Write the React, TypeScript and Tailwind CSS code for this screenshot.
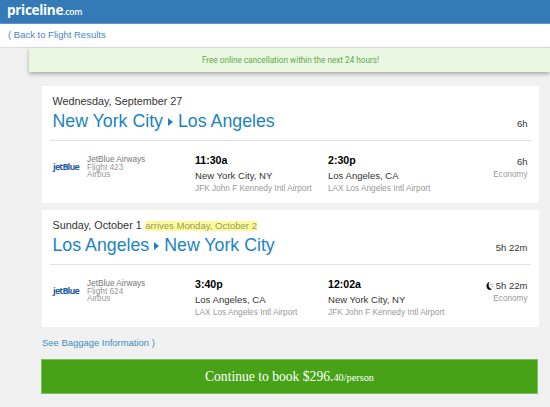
import React from "react";

interface Stop {
  time: string;
  city: string;
  airport: string;
}

interface Flight {
  date: string;
  arrives?: string;
  from: string;
  to: string;
  duration: string;
  flightNumber: string;
  overnight: boolean;
  stops: Stop[];
}

const flights: Flight[] = [
  {
    date: "Wednesday, September 27",
    from: "New York City",
    to: "Los Angeles",
    duration: "6h",
    flightNumber: "Flight 423",
    overnight: false,
    stops: [
      { time: "11:30a", city: "New York City, NY", airport: "JFK John F Kennedy Intl Airport" },
      { time: "2:30p", city: "Los Angeles, CA", airport: "LAX Los Angeles Intl Airport" },
    ],
  },
  {
    date: "Sunday, October 1",
    arrives: "arrives Monday, October 2",
    from: "Los Angeles",
    to: "New York City",
    duration: "5h 22m",
    flightNumber: "Flight 624",
    overnight: true,
    stops: [
      { time: "3:40p", city: "Los Angeles, CA", airport: "LAX Los Angeles Intl Airport" },
      { time: "12:02a", city: "New York City, NY", airport: "JFK John F Kennedy Intl Airport" },
    ],
  },
];

const MoonIcon: React.FC = () => (
  <svg width="8" height="8" viewBox="0 0 8 8" className="mr-[2px]">
    <path d="M3.6 0C-0.6 0.6 -0.6 7.4 3.6 7.9C4.6 8 5.4 7.6 5.9 7C2.6 6.6 1.8 2.6 3.6 0Z" fill="#111" />
    <circle cx="4.9" cy="2.6" r="0.7" fill="#4f86ad" />
    <circle cx="7" cy="2" r="0.6" fill="#8a8a8a" />
    <circle cx="6.2" cy="4.4" r="0.6" fill="#8a8a8a" />
  </svg>
);

const FlightCard: React.FC<{ flight: Flight }> = ({ flight }) => {
  return (
    <article className="h-[117px] rounded-[1px] bg-white px-2">
      <div className="flex h-[55px] items-start justify-between border-b border-[#e2e2e2] pl-[2.5px] pr-[3px] pt-[9px]">
        <div>
          <p className="flex h-[13px] items-baseline text-[10.8px] leading-[13px] text-[#333]">
            {flight.date}
            {flight.arrives && (
              <span className="ml-[3.5px] bg-[#fdfb98] text-[9.55px] leading-[10px] text-[#999966]">
                {flight.arrives}
              </span>
            )}
          </p>
          <h2 className="mt-[3px] flex items-center text-[17.75px] leading-5 text-[#1a84c2]">
            {flight.from}
            <svg width="5" height="8" viewBox="0 0 5 8" className="mx-[5px] mt-[2px]">
              <path d="M0 0L5 4L0 8Z" fill="#1a84c2" />
            </svg>
            {flight.to}
          </h2>
        </div>
        <span className="mt-[23px] text-[9.5px] leading-3 text-[#333]">{flight.duration}</span>
      </div>
      <div className="flex pl-[3px] pr-[3px] pt-[13px]">
        <div className="mt-[6px] w-[34px] font-['Open_Sans',sans-serif] text-[8.9px] font-bold leading-[13px] tracking-[-0.8px] text-[#1f5fa8]">
          jetBlue
        </div>
        <div className="mt-[2px] w-[108px] text-[8.25px] leading-[7.5px] text-[#999]">
          <p className="text-[#777]">JetBlue Airways</p>
          <p>{flight.flightNumber}</p>
          <p>Airbus</p>
        </div>
        {flight.stops.map((stop) => (
          <div key={stop.airport} className="w-[133px] whitespace-nowrap">
            <p className="text-[10.6px] font-bold leading-[13px] text-black">{stop.time}</p>
            <p className="mt-[3px] text-[9.55px] leading-3 text-[#333]">{stop.city}</p>
            <p className="mt-[1px] text-[8.25px] leading-[11px] text-[#999]">{stop.airport}</p>
          </div>
        ))}
        <div className="mt-[2px] flex-1 whitespace-nowrap text-right">
          <p className="flex items-center justify-end text-[9.5px] leading-3 text-[#333]">
            {flight.overnight && <MoonIcon />}
            {flight.duration}
          </p>
          <p className="mt-[1px] text-[8.2px] leading-[11px] text-[#999]">Economy</p>
        </div>
      </div>
    </article>
  );
};

const App: React.FC = () => {
  return (
    <div className="h-[407px] w-[550px] overflow-hidden bg-[#f1f1f1] font-['Liberation_Sans',Arial,sans-serif]">
      <header className="flex h-6 items-baseline border-b border-[#5b94c8] bg-[#337ab7] pl-[7px] font-['Open_Sans',sans-serif] text-white">
        <span className="text-[13.5px] font-bold leading-[20px] tracking-[-0.3px]">priceline</span>
        <span className="text-[8.5px] font-semibold leading-[20px] tracking-[-0.2px]">.com</span>
      </header>
      <nav className="flex h-6 items-center border-b border-[#dedede] bg-white pl-2 text-[9.5px] text-[#4c86bd]">
        <a href="#">( Back to Flight Results</a>
      </nav>
      <div className="ml-[29px] flex h-6 items-center justify-center bg-[#eaf7e3] pl-[2px] pt-px font-[Roboto,sans-serif] text-[8.2px] text-[#62a84b] shadow-[0_2px_4px_rgba(0,0,0,0.3)]">
        Free online cancellation within the next 24 hours!
      </div>
      <main className="ml-[42px] mt-[14px] flex w-[496.5px] flex-col gap-[7px]">
        {flights.map((flight) => (
          <FlightCard key={flight.date} flight={flight} />
        ))}
      </main>
      <a href="#" className="ml-[42px] mt-[10px] block text-[9.45px] leading-3 text-[#3a8ec4]">
        See Baggage Information )
      </a>
      <button className="ml-[41px] mt-[10px] flex h-[35px] w-[497px] items-center justify-center border border-[#7fbf5f] bg-[#47a217] pt-px font-['Liberation_Serif',serif] text-[13.6px] text-white">
        <span>
          Continue to book $296.<span className="text-[10.3px]">40/person</span>
        </span>
      </button>
    </div>
  );
};

export default App;
